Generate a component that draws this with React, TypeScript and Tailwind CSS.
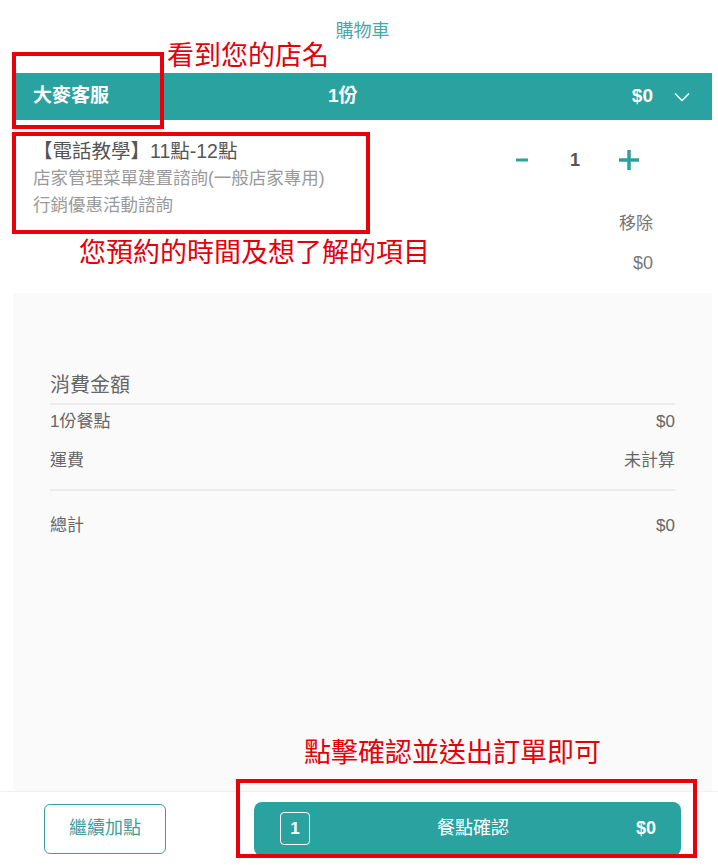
const font = "font-['Liberation_Sans','Noto_Sans_CJK_TC',sans-serif]";

function Annotations() {
  return (
    <>
      <div className="absolute left-[12px] top-[52px] h-[77px] w-[152px] border-4 border-[#e8000b]" />
      <div className="absolute left-[12px] top-[132px] h-[102px] w-[358px] border-4 border-[#e8000b]" />
      <div className="absolute left-[236px] top-[779px] h-[79px] w-[461px] border-4 border-[#e8000b]" />
      <p className="absolute left-[167px] top-[41px] text-[27px] leading-[30px] text-[#e3000b]">
        看到您的店名
      </p>
      <p className="absolute left-[79px] top-[238px] text-[27px] leading-[30px] text-[#e3000b]">
        您預約的時間及想了解的項目
      </p>
      <p className="absolute left-[304px] top-[738px] text-[27px] leading-[30px] text-[#e3000b]">
        點擊確認並送出訂單即可
      </p>
    </>
  );
}

function SummaryRow({ label, value }: { label: string; value: string }) {
  return (
    <div className="flex items-center justify-between text-[17px] leading-[26px] text-[#666]">
      <span>{label}</span>
      <span>{value}</span>
    </div>
  );
}

export default function App() {
  return (
    <div className={`relative flex h-[865px] w-[718px] flex-col overflow-hidden bg-white ${font}`}>
      <header className="ml-[13px] mr-[6px] h-[73px] pt-[20px] text-center text-[18px] leading-[22px] text-[#45a8a6]">
        購物車
      </header>

      <div className="ml-[13px] mr-[6px] flex h-[47px] items-center bg-[#2aa29f] pl-[20px] pr-[22px] text-[19px] font-bold text-white">
        <span className="w-[295px]">大麥客服</span>
        <span className="flex-1">1份</span>
        <span>$0</span>
        <svg width="16" height="10" viewBox="0 0 16 10" className="ml-[21px]">
          <path d="M1 1.5l7 7 7-7" fill="none" stroke="white" strokeWidth="1.5" />
        </svg>
      </div>

      <section className="ml-[13px] mr-[6px] flex h-[173px] justify-between pl-[20px] pr-[59px] pt-[18px]">
        <div className="leading-[27px]">
          <p className="text-[19.5px] text-[#555]">【電話教學】11點-12點</p>
          <p className="text-[17.5px] text-[#9a9a9a]">店家管理菜單建置諮詢(一般店家專用)</p>
          <p className="text-[17.5px] text-[#9a9a9a]">行銷優惠活動諮詢</p>
        </div>
        <div className="flex flex-col items-end">
          <div className="mt-[6px] flex h-[32px] items-center">
            <svg width="12" height="12" viewBox="0 0 12 12" className="mr-[42px]">
              <path d="M0 6h12" stroke="#2aa29f" strokeWidth="3" />
            </svg>
            <span className="text-[18px] font-bold text-[#555]">1</span>
            <svg width="20" height="20" viewBox="0 0 20 20" className="ml-[39px] mr-[14px]">
              <path d="M0 10h20M10 0v20" stroke="#2aa29f" strokeWidth="3.5" />
            </svg>
          </div>
          <span className="mt-[36px] text-[17px] leading-[24px] text-[#777]">移除</span>
          <span className="mt-[15px] text-[18px] leading-[24px] text-[#777]">$0</span>
        </div>
      </section>

      <section className="ml-[13px] mr-[6px] flex-1 bg-[#fafafa] px-[37px] pt-[78px]">
        <p className="border-b-2 border-[#ececec] pb-[4px] text-[20px] leading-[28px] text-[#666]">
          消費金額
        </p>
        <div className="pt-[4px]">
          <SummaryRow label="1份餐點" value="$0" />
        </div>
        <div className="mt-[13px] border-b-2 border-[#ececec] pb-[15px]">
          <SummaryRow label="運費" value="未計算" />
        </div>
        <div className="mt-[22px]">
          <SummaryRow label="總計" value="$0" />
        </div>
      </section>

      <footer className="flex h-[74px] items-center border-t border-[#f0f0f0] bg-white">
        <button className="ml-[44px] h-[50px] w-[122px] rounded-[6px] border border-[#3f9d9c] text-[18px] text-[#3f9d9c]">
          繼續加點
        </button>
        <button className="ml-[88px] flex h-[54px] w-[427px] items-center rounded-[8px] bg-[#2aa29f] pl-[26px] pr-[25px] text-white">
          <span className="flex h-[33px] w-[30px] items-center justify-center rounded-[4px] border border-white text-[17px] font-bold">
            1
          </span>
          <span className="flex-1 text-center text-[18px]">餐點確認</span>
          <span className="text-[18px] font-bold">$0</span>
        </button>
      </footer>

      <Annotations />
    </div>
  );
}
